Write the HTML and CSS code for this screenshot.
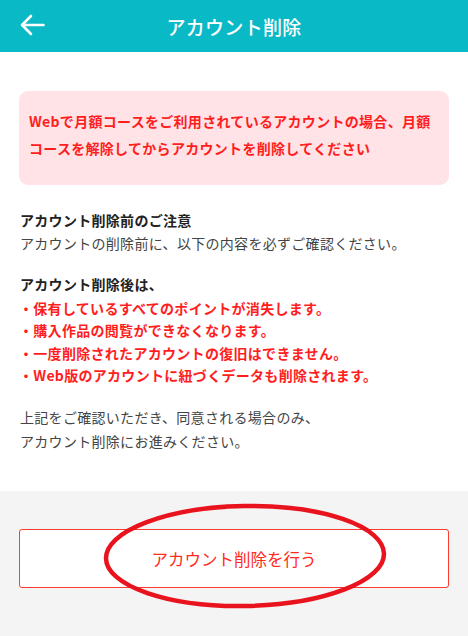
FILE: index.html
```html
<!DOCTYPE html>
<html lang="ja">
<head>
<meta charset="utf-8">
<link rel="stylesheet" href="styles.css">
</head>
<body>
<div class="page">
  <header class="header">
    <svg class="back" width="26" height="22" viewBox="0 0 26 22"><path d="M24.5 11H3M12 2L3 11L12 20" fill="none" stroke="#fff" stroke-width="2.6" stroke-linecap="round" stroke-linejoin="round"/></svg>
    <h1 class="title">アカウント削除</h1>
  </header>
  <main class="content">
    <div class="alert">Webで月額コースをご利用されているアカウントの場合、月額コースを解除してからアカウントを削除してください</div>
    <p class="head">アカウント削除前のご注意</p>
    <p class="body">アカウントの削除前に、以下の内容を必ずご確認ください。</p>
    <p class="head after">アカウント削除後は、</p>
    <ul class="list">
      <li>・保有しているすべてのポイントが消失します。</li>
      <li>・購入作品の閲覧ができなくなります。</li>
      <li>・一度削除されたアカウントの復旧はできません。</li>
      <li>・Web版のアカウントに紐づくデータも削除されます。</li>
    </ul>
    <p class="body confirm">上記をご確認いただき、同意される場合のみ、<br>アカウント削除にお進みください。</p>
  </main>
  <footer class="footer">
    <div class="btn-wrap">
      <button class="btn">アカウント削除を行う</button>
      <svg class="circle" width="290" height="112" viewBox="0 0 290 112"><ellipse cx="145" cy="55" rx="139" ry="50" fill="none" stroke="#e8131d" stroke-width="4.5" transform="rotate(-1 145 55)"/></svg>
    </div>
  </footer>
</div>
</body>
</html>
```
FILE: styles.css
```css
* { box-sizing: border-box; margin: 0; padding: 0; }
html, body { width: 468px; height: 636px; overflow: hidden; }
body { font-family: "Noto Sans CJK JP", "Noto Sans", sans-serif; background: #fff; color: #333; }
.page { display: flex; flex-direction: column; height: 636px; }
.header { height: 52px; background: #09b9c6; display: flex; align-items: center; justify-content: center; position: relative; }
.back { position: absolute; left: 19px; top: 14px; }
.title { color: #fff; font-size: 19px; font-weight: 500; letter-spacing: 0.3px; }
.content { padding: 39px 19px 0; height: 439px; }
.alert { background: #ffe3e6; border-radius: 9px; color: #ff1e1e; font-weight: 700; font-size: 14px; line-height: 27px; padding: 17px 12px 23px 10px; letter-spacing: 0.3px; }
.head { font-size: 14px; font-weight: 700; color: #222; line-height: 22px; margin-top: 24px; padding-left: 1px; letter-spacing: 0.3px; }
.body { font-size: 14px; color: #444; line-height: 24px; padding-left: 1px; letter-spacing: 0.3px; }
.head.after { margin-top: 18px; }
.list { list-style: none; color: #ff1e1e; font-weight: 700; font-size: 14px; line-height: 22.4px; margin-top: 2px; letter-spacing: 0.3px; }
.confirm { margin-top: 18px; }
.footer { flex: 1; background: #f4f4f4; padding: 38px 19px 0; }
.btn-wrap { position: relative; }
.btn { width: 100%; height: 59px; background: #fff; border: 1px solid #ff3a30; border-radius: 3px; color: #ff2a20; font-family: inherit; font-size: 16.5px; font-weight: 400; display: flex; align-items: center; justify-content: center; }
.circle { position: absolute; left: 81px; top: -28px; pointer-events: none; }
```
